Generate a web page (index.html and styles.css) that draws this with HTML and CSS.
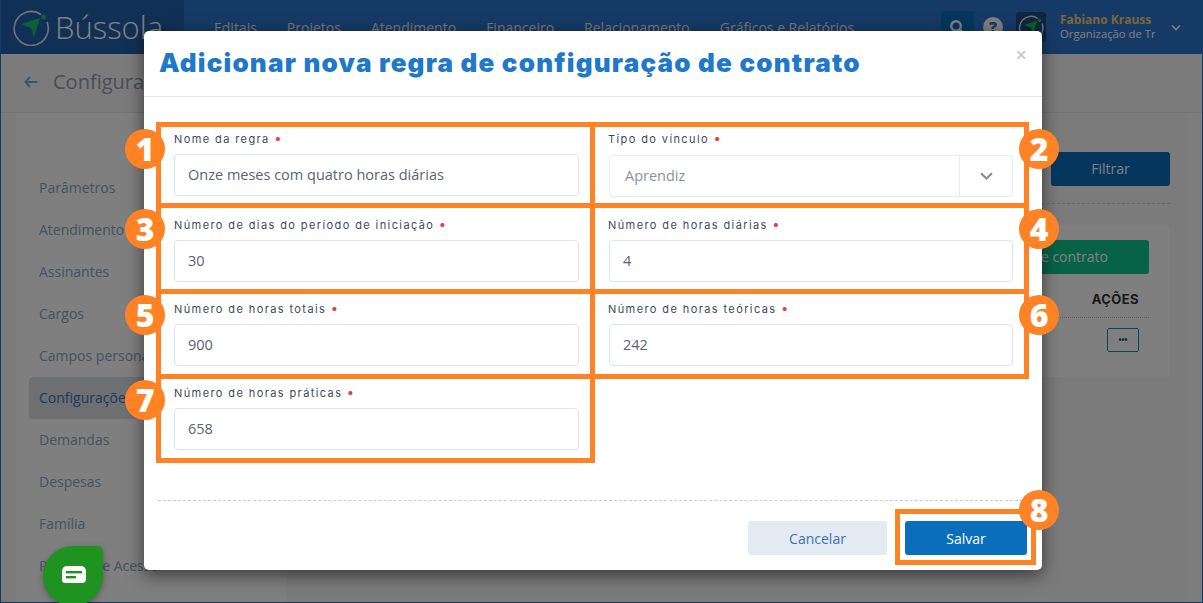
FILE: index.html
```html
<!DOCTYPE html>
<html lang="pt-BR">
<head>
    <meta charset="UTF-8">
    <meta name="viewport" content="width=device-width, initial-scale=1.0">
    <title>Bússola - Configurações</title>
    <link rel="stylesheet" href="styles.css">
</head>
<body>
    <div class="app">
        <header class="topbar">
            <div class="brand">
                <svg class="brand-icon" width="38" height="38" viewBox="0 0 38 38">
                    <path d="M29 6.5A17 17 0 1 0 35 14" fill="none" stroke="#dfe9f3" stroke-width="1.6"/>
                    <circle cx="31.5" cy="9" r="2.4" fill="#16c46c"/>
                    <path d="M9 16L28 10L22 29L19 20Z" fill="#16c46c"/>
                </svg>
                <span class="brand-name">Bússola</span>
            </div>
            <nav class="topnav">
                <a>Editais</a>
                <a>Projetos</a>
                <a>Atendimento</a>
                <a>Financeiro</a>
                <a>Relacionamento</a>
                <a>Gráficos e Relatórios</a>
            </nav>
            <div class="top-tools">
                <span class="search-btn">
                    <svg width="17" height="17" viewBox="0 0 17 17"><circle cx="7" cy="7" r="4.8" fill="none" stroke="#fff" stroke-width="2.4"/><path d="M10.5 10.5L15 15" stroke="#fff" stroke-width="3" stroke-linecap="round"/></svg>
                </span>
                <span class="help-btn">?</span>
                <span class="avatar">
                    <svg width="26" height="26" viewBox="0 0 38 38">
                        <path d="M29 6.5A17 17 0 1 0 35 14" fill="none" stroke="#dfe9f3" stroke-width="2"/>
                        <circle cx="31.5" cy="9" r="2.6" fill="#16c43c"/>
                        <path d="M9 16L28 10L22 29L19 20Z" fill="#16c43c"/>
                    </svg>
                </span>
                <div class="user">
                    <strong>Fabiano Krauss</strong>
                    <span>Organização de Treinamento</span>
                </div>
                <svg class="user-chevron" width="10" height="7" viewBox="0 0 10 7"><path d="M1 1.5L5 5.5L9 1.5" fill="none" stroke="#fff" stroke-width="1.6"/></svg>
            </div>
        </header>

        <div class="subbar">
            <svg width="14" height="12" viewBox="0 0 14 12"><path d="M6 1L1.5 6L6 11M2 6H13.5" fill="none" stroke="#6fa8e0" stroke-width="2"/></svg>
            <span class="subbar-title">Configurações</span>
        </div>

        <div class="main">
            <aside class="sidebar">
                <a>Parâmetros</a>
                <a>Atendimento</a>
                <a>Assinantes</a>
                <a>Cargos</a>
                <a>Campos personalizados</a>
                <a class="active">Configurações</a>
                <a>Demandas</a>
                <a>Despesas</a>
                <a>Família</a>
                <a>Período de Acesso</a>
            </aside>
            <section class="content">
                <div class="filter-row"><span class="filter-btn">Filtrar</span></div>
                <div class="rules-card">
                    <div class="card-top"><span class="add-btn">Adicionar regra de contrato</span></div>
                    <div class="table-head">AÇÕES</div>
                    <div class="table-row"><span class="more-btn">•••</span></div>
                </div>
            </section>
        </div>
    </div>

    <div class="backdrop"></div>

    <div class="chat-bubble">
        <svg width="24" height="18" viewBox="0 0 24 18">
            <path d="M5 0H19A5 5 0 0 1 24 5V13A4 4 0 0 1 20 17H3A3 3 0 0 1 0 14V5A5 5 0 0 1 5 0Z" fill="#fff"/>
            <rect x="4" y="5" width="16" height="2.4" fill="#1f931f"/>
            <rect x="4" y="10" width="10" height="2.4" fill="#1f931f"/>
        </svg>
    </div>

    <div class="modal">
        <div class="modal-header">
            <h1>Adicionar nova regra de configuração de contrato</h1>
            <span class="modal-close">×</span>
        </div>
        <form class="modal-body">
            <div class="rule-grid">
                <div class="field">
                    <label>Nome da regra <i>•</i></label>
                    <input type="text" value="Onze meses com quatro horas diárias">
                    <span class="badge badge-left badge-first">1</span>
                </div>
                <div class="field field-right">
                    <label>Tipo do vínculo <i>•</i></label>
                    <div class="select">
                        <span class="select-value">Aprendiz</span>
                        <span class="select-arrow">
                            <svg width="13" height="8" viewBox="0 0 13 8"><path d="M1 1.2L6.5 6.5L12 1.2" fill="none" stroke="#8a8a8a" stroke-width="2"/></svg>
                        </span>
                    </div>
                    <span class="badge badge-right badge-first">2</span>
                </div>
                <div class="field">
                    <label>Número de dias do período de iniciação <i>•</i></label>
                    <input type="text" value="30">
                    <span class="badge badge-left">3</span>
                </div>
                <div class="field field-right">
                    <label>Número de horas diárias <i>•</i></label>
                    <input type="text" value="4">
                    <span class="badge badge-right">4</span>
                </div>
                <div class="field field-low">
                    <label>Número de horas totais <i>•</i></label>
                    <input type="text" value="900">
                    <span class="badge badge-left">5</span>
                </div>
                <div class="field field-right field-low">
                    <label>Número de horas teóricas <i>•</i></label>
                    <input type="text" value="242">
                    <span class="badge badge-right">6</span>
                </div>
                <div class="field field-low">
                    <label>Número de horas práticas <i>•</i></label>
                    <input type="text" value="658">
                    <span class="badge badge-left">7</span>
                </div>
            </div>
        </form>
        <div class="modal-footer">
            <button type="button" class="btn-cancel">Cancelar</button>
            <div class="save-box">
                <button type="button" class="btn-save">Salvar</button>
                <span class="badge badge-save">8</span>
            </div>
        </div>
    </div>
</body>
</html>
```

FILE: styles.css
```css
* {
    box-sizing: border-box;
}
html, body {
    margin: 0;
    height: 100%;
}
body {
    font-family: "Open Sans", sans-serif;
    background-color: #f6f7f9;
    overflow: hidden;
    position: relative;
}
.app {
    height: 603px;
    display: flex;
    flex-direction: column;
    border-left: 1px solid #1f78c8;
    border-right: 1px solid #1f78c8;
    border-bottom: 1px solid #1f78c8;
}

/* top bar */
.topbar {
    height: 54px;
    background-color: #2c74cc;
    display: flex;
    flex-shrink: 0;
}
.brand {
    width: 183px;
    background-color: #2260aa;
    display: flex;
    align-items: center;
    padding-left: 11px;
    gap: 5px;
}
.brand-name {
    font-size: 31px;
    font-weight: 300;
    color: #fff;
    line-height: 1;
}
.topnav {
    display: flex;
    align-items: center;
    padding-left: 30px;
    font-size: 14px;
    color: #e6eef8;
    gap: 30px;
}
.top-tools {
    margin-left: auto;
    display: flex;
    align-items: center;
    padding-right: 21px;
}
.search-btn {
    width: 33px;
    height: 33px;
    border-radius: 3px;
    background-color: #0a6ebd;
    display: flex;
    align-items: center;
    justify-content: center;
}
.help-btn {
    width: 20px;
    height: 20px;
    margin-left: 9px;
    border-radius: 50%;
    background-color: #fff;
    color: #2c74cc;
    font-size: 16px;
    font-weight: 800;
    line-height: 20px;
    text-align: center;
}
.avatar {
    width: 30px;
    height: 30px;
    margin-left: 13px;
    border-radius: 3px;
    background-color: #1f4a80;
    display: flex;
    align-items: center;
    justify-content: center;
}
.user {
    width: 95px;
    margin-left: 14px;
    white-space: nowrap;
    font-size: 11.3px;
    line-height: 14px;
    color: #fff;
}
.user strong {
    display: block;
    color: #f3cf6e;
    font-size: 12px;
}
.user span {
    display: block;
    overflow: hidden;
}
.user-chevron {
    margin-left: 16px;
}

/* page behind the modal */
.subbar {
    height: 59px;
    flex-shrink: 0;
    display: flex;
    align-items: center;
    padding: 0 0 3px 23px;
    gap: 15px;
    border-bottom: 1px solid #e3e6ea;
    background-color: #f6f7f9;
}
.subbar-title {
    font-size: 20px;
    color: #949ca8;
}
.main {
    flex: 1;
    display: flex;
    padding-left: 15px;
    min-height: 0;
    border-right: 17px solid #fbfbfc;
}
.sidebar {
    width: 270px;
    background-color: #fff;
    padding: 54px 0 0 13px;
    display: flex;
    flex-direction: column;
}
.sidebar a {
    height: 42px;
    flex-shrink: 0;
    padding-left: 10px;
    font-size: 14px;
    line-height: 42px;
    color: #8ca4c2;
    white-space: nowrap;
}
.sidebar a.active {
    background-color: #dcdee2;
    color: #3a74b8;
    border-radius: 4px;
}
.content {
    flex: 1;
    padding-right: 15px;
    display: flex;
    flex-direction: column;
    align-items: flex-end;
}
.filter-row {
    width: 100%;
    height: 91px;
    padding-top: 39px;
    display: flex;
    justify-content: flex-end;
    border-bottom: 1px dashed #ccd;
    margin-bottom: 21px;
}
.filter-btn {
    width: 119px;
    height: 34px;
    border-radius: 3px;
    background-color: #0a6ebd;
    color: #fff;
    font-size: 14px;
    line-height: 34px;
    text-align: center;
}
.rules-card {
    width: 100%;
    height: 152px;
    border-radius: 4px;
    background-color: #fff;
    padding: 15px 21px 0;
}
.card-top {
    display: flex;
    justify-content: flex-end;
}
.add-btn {
    height: 34px;
    border-radius: 3px;
    background-color: #10c48c;
    color: #fff;
    font-size: 14px;
    line-height: 34px;
    padding: 0 41px;
    white-space: nowrap;
}
.table-head {
    margin-top: 17px;
    height: 27px;
    padding-right: 10px;
    text-align: right;
    font-family: Inter, sans-serif;
    font-size: 13px;
    font-weight: 700;
    letter-spacing: 0.4px;
    color: #333;
    border-bottom: 1px dotted #bbb;
}
.table-row {
    display: flex;
    justify-content: flex-end;
    padding: 10px 10px 0 0;
}
.more-btn {
    width: 32px;
    height: 24px;
    border: 1px solid #0a8ebd;
    border-radius: 2px;
    color: #1f4f87;
    font-size: 8px;
    font-weight: 700;
    line-height: 21px;
    text-align: center;
}

/* overlay */
.backdrop {
    position: absolute;
    inset: 0;
    background-color: rgba(0, 0, 0, 0.5);
}
.chat-bubble {
    position: absolute;
    left: 43px;
    top: 546px;
    width: 60px;
    height: 60px;
    border-radius: 50% 6px 50% 50%;
    background-color: #1f931f;
    box-shadow: 0 2px 6px rgba(0, 0, 0, 0.3);
    display: flex;
    align-items: center;
    justify-content: center;
    padding: 0 0 3px 2px;
}
.modal {
    position: absolute;
    left: 144px;
    top: 31px;
    width: 898px;
    height: 539px;
    background-color: #fff;
    border-radius: 5px;
    box-shadow: 0 5px 18px rgba(0, 0, 0, 0.55);
    display: flex;
    flex-direction: column;
}
.modal-header {
    height: 66px;
    flex-shrink: 0;
    padding-left: 15px;
    display: flex;
    align-items: center;
    border-bottom: 1px solid #e4e7eb;
    position: relative;
}
.modal-header h1 {
    margin: 0;
    font-family: Inter, sans-serif;
    font-size: 26px;
    font-weight: 900;
    color: #1f78c8;
    letter-spacing: 1.2px;
    padding-bottom: 2px;
    white-space: nowrap;
}
.modal-close {
    position: absolute;
    right: 15px;
    top: 12px;
    color: #c8c8c8;
    font-size: 20px;
    font-weight: 600;
    line-height: 24px;
}
.modal-body {
    height: 404px;
    flex-shrink: 0;
    padding: 30px 0 0 3px;
    border-bottom: 1px dashed #c3cedb;
    margin: 0 14px;
}
.rule-grid {
    display: grid;
    grid-template-columns: 429px 429px;
    grid-template-rows: 76px 81px 80px 79px;
    gap: 5px;
}
.field {
    outline: 5px solid #ff8225;
    position: relative;
    display: flex;
    flex-direction: column;
    justify-content: flex-end;
    padding: 0 11px 7px 13px;
}
.field-low {
    padding-bottom: 8px;
}
.field-right {
    padding: 0 11px 7px 14px;
}
.field-right.field-low {
    padding-bottom: 8px;
}
.field-right label {
    margin-left: -1px;
}
.field label {
    font-family: Inter, sans-serif;
    font-size: 11px;
    font-weight: 400;
    letter-spacing: 1.4px;
    color: #3d4a5c;
    line-height: 14px;
    margin-bottom: 8px;
}
.field label i {
    color: #e53e3e;
    font-style: normal;
    font-size: 13px;
    line-height: 10px;
}
.field input {
    width: 100%;
    height: 42px;
    border: 1px solid #dbe4ef;
    border-radius: 4px;
    padding: 0 13px 2px;
    font-family: "Open Sans", sans-serif;
    font-size: 14.5px;
    color: #5b6470;
    background-color: #fff;
}
.select {
    height: 42px;
    margin: 1px 0 -1px;
    border: 1px solid #e6ebf2;
    border-radius: 4px;
    display: flex;
    align-items: stretch;
}
.select-value {
    flex: 1;
    padding-left: 15px;
    font-size: 14.5px;
    line-height: 40px;
    color: #8b929b;
}
.select-arrow {
    width: 53px;
    border-left: 1px solid #e6ebf2;
    display: flex;
    align-items: center;
    justify-content: center;
}
.badge {
    position: absolute;
    width: 40px;
    height: 40px;
    border-radius: 50%;
    background-color: #ff8225;
    color: #fff;
    font-family: "Open Sans", sans-serif;
    font-size: 32px;
    font-weight: 800;
    line-height: 40px;
    text-align: center;
    top: 1px;
}
.badge-first {
    top: 2px;
}
.badge-left {
    left: -36px;
}
.badge-right {
    right: -35px;
}
.modal-footer {
    display: flex;
    justify-content: flex-end;
    align-items: flex-start;
    padding: 8px 6px 0 0;
    gap: 8px;
}
.btn-cancel, .btn-save {
    height: 34px;
    border: none;
    border-radius: 3px;
    font-family: "Open Sans", sans-serif;
    font-size: 14px;
}
.btn-cancel {
    width: 139px;
    margin-top: 12px;
    background-color: #e4eaf2;
    color: #3a72b8;
}
.btn-save {
    width: 122px;
    background-color: #0a6ebd;
    color: #fff;
    font-weight: 500;
}
.save-box {
    border: 5px solid #ff8225;
    padding: 7px 4px 5px 5px;
    position: relative;
    display: flex;
}
.badge-save {
    top: -24px;
    right: -28px;
}
```
